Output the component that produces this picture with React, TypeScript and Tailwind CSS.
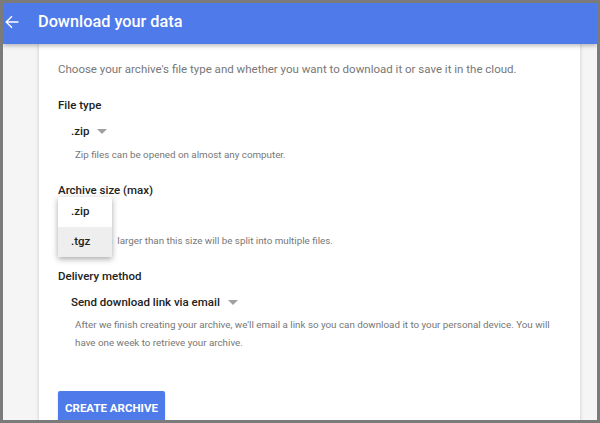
import React from "react";

function Caret({ className = "" }: { className?: string }) {
  return (
    <svg width="10" height="5" viewBox="0 0 10 5" className={className}>
      <path d="M0 0 L10 0 L5 5 Z" fill="#a0a0a0" />
    </svg>
  );
}

export default function App() {
  return (
    <div
      className="w-[600px] h-[423px] bg-[#7b7b7b] p-[3px] overflow-hidden"
      style={{ fontFamily: "Roboto, 'Liberation Sans', sans-serif" }}
    >
      <div className="relative w-full h-full flex flex-col bg-[#f5f5f5] overflow-hidden">
        <header className="relative z-10 h-[41px] shrink-0 bg-[#4e7be9] flex items-center shadow-[0_2px_4px_rgba(0,0,0,0.25)]">
          <svg width="14" height="14" viewBox="0 0 14 14" className="ml-[2px] mt-[-3px]">
            <path d="M13.5 7H1.2M7 1.2L1.2 7 7 12.8" fill="none" stroke="#ffffff" strokeWidth="1.4" />
          </svg>
          <h1 className="ml-[19px] text-[16.3px] font-medium text-white leading-none mt-[-3px]">
            Download your data
          </h1>
        </header>
        <div className="flex flex-1 min-h-0">
          <div className="w-[35px] shrink-0" />
          <main className="relative w-[543px] shrink-0 bg-white border-l border-r border-[#e3e3e3] shadow-[0_0_3px_rgba(0,0,0,0.12)] pl-[19px] pt-[16px]">
            <p className="text-[11.5px] leading-[18px] text-[#777777]">
              Choose your archive's file type and whether you want to download it or save it in the cloud.
            </p>

            <h2 className="mt-[18px] text-[11.5px] leading-[18px] font-medium text-[#222222]">File type</h2>
            <div className="mt-[8px] pl-[13px] flex items-center gap-[8px] text-[11.5px] leading-[18px] font-medium text-[#222222]">
              <span>.zip</span>
              <Caret />
            </div>
            <p className="mt-[7px] pl-[17px] text-[9.8px] leading-[16px] text-[#777777]">
              Zip files can be opened on almost any computer.
            </p>

            <h2 className="mt-[18px] text-[11.5px] leading-[18px] font-medium text-[#222222]">Archive size (max)</h2>
            <div className="mt-[7px] pl-[13px] flex items-center gap-[8px] text-[11.5px] leading-[18px] font-medium text-[#222222]">
              <span>2GB</span>
              <Caret />
            </div>
            <p className="mt-[9px] pl-[17px] text-[9.8px] leading-[16px] text-[#777777]">
              Archives&nbsp; larger than this size will be split into multiple files.
            </p>

            <h2 className="mt-[18px] text-[11.5px] leading-[18px] font-medium text-[#222222]">Delivery method</h2>
            <div className="mt-[8px] pl-[13px] flex items-center gap-[8px] text-[11.5px] leading-[18px] font-medium text-[#222222]">
              <span>Send download link via email</span>
              <Caret />
            </div>
            <p className="mt-[5px] pl-[17px] pr-[24px] text-[9.8px] leading-[18px] text-[#777777]">
              After we finish creating your archive, we'll email a link so you can download it to your personal device. You will have one week to retrieve your archive.
            </p>

            <button className="mt-[39px] h-[36px] px-[7px] rounded-[2px] bg-[#4e7be9] text-white text-[11.5px] font-bold shadow-[0_1px_2px_rgba(0,0,0,0.2)]">
              CREATE ARCHIVE
            </button>

            <div className="absolute left-[19px] top-[153px] w-[54px] bg-white shadow-[0_2px_6px_rgba(0,0,0,0.35)] text-[11.5px] font-medium text-[#222222] z-20">
              <div className="h-[30px] flex items-center pl-[13px]">.zip</div>
              <div className="h-[30px] flex items-center pl-[13px] bg-[#eeeeee]">.tgz</div>
            </div>
          </main>
          <div className="flex-1" />
        </div>
      </div>
    </div>
  );
}
